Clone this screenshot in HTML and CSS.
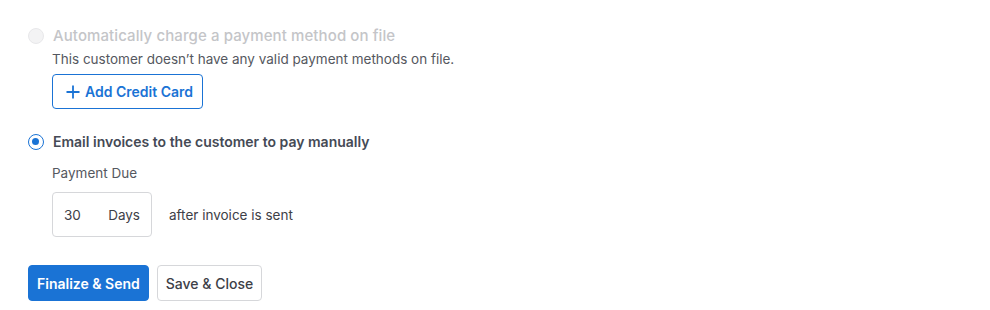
FILE: index.html
```
<!DOCTYPE html>
<html>
<head>
<meta charset="utf-8">
<link rel="stylesheet" href="styles.css">
</head>
<body>
<div class="page">
  <div class="option option-disabled">
    <div class="radio-row">
      <span class="radio radio-off"></span>
      <span class="radio-label">Automatically charge a payment method on file</span>
    </div>
    <div class="option-body">
      <p class="desc">This customer doesn’t have any valid payment methods on file.</p>
      <button class="btn btn-outline">
        <svg class="plus" width="14" height="14" viewBox="0 0 14 14"><path d="M7 0.5v13M0.5 7h13" stroke="currentColor" stroke-width="1.8" fill="none"/></svg>
        <span>Add Credit Card</span>
      </button>
    </div>
  </div>
  <div class="option option-active">
    <div class="radio-row">
      <span class="radio radio-on"></span>
      <span class="radio-label">Email invoices to the customer to pay manually</span>
    </div>
    <div class="option-body">
      <p class="field-label">Payment Due</p>
      <div class="due-row">
        <div class="due-box"><span class="due-num">30</span><span class="due-unit">Days</span></div>
        <span class="due-after">after invoice is sent</span>
      </div>
    </div>
  </div>
  <div class="actions">
    <button class="btn btn-primary">Finalize &amp; Send</button>
    <button class="btn btn-secondary">Save &amp; Close</button>
  </div>
</div>
</body>
</html>
```
FILE: styles.css
```
html, body { margin: 0; padding: 0; background: #fff; }
body { font-family: Inter, "Noto Sans", sans-serif; font-size: 13.5px; color: #4f5259; }
.page { padding: 28px 0 0 28px; }
p { margin: 0; }
.radio-row { display: flex; align-items: center; height: 16px; gap: 9px; }
.radio { box-sizing: border-box; width: 16px; height: 16px; border-radius: 50%; flex: none; }
.radio-off { background: #f3f3f4; border: 1px solid #e8e8ea; }
.radio-on { border: 1.5px solid #1a73d5; position: relative; background: #fff; }
.radio-on::after { content: ""; position: absolute; left: 3px; top: 3px; width: 7px; height: 7px; border-radius: 50%; background: #1a73d5; }
.radio-label { font-weight: 500; line-height: 16px; }
.option-disabled .radio-label { color: #c4c5c8; font-size: 15px; letter-spacing: 0.1px; }
.option-active .radio-label { color: #454a55; font-weight: 600; font-size: 14px; }
.option-body { padding-left: 24px; }
.desc { margin-top: 7px; line-height: 16px; color: #555860; }
.btn { font-family: inherit; font-size: 14px; border-radius: 4px; cursor: pointer; box-sizing: border-box; }
.btn-outline { margin-top: 7px; height: 35px; padding: 0 9px 0 13px; background: #fff; border: 1px solid #1a73d5; color: #1a73d5; font-weight: 600; display: flex; align-items: center; gap: 5px; }
.plus { display: block; }
.option-active { margin-top: 25px; }
.field-label { margin-top: 15px; line-height: 16px; color: #555860; }
.due-row { display: flex; align-items: center; margin-top: 11px; gap: 17px; }
.due-box { box-sizing: border-box; width: 100px; height: 45px; border: 1px solid #d6d7da; border-radius: 4px; display: flex; align-items: center; padding: 0 11px 0 11px; justify-content: space-between; color: #3d4047; }
.due-after { color: #3d4047; }
.actions { display: flex; gap: 8px; margin-top: 28px; }
.btn-primary { height: 36px; padding: 0 8px; background: #1a73d5; border: 1px solid #1a73d5; color: #fff; font-weight: 600; }
.btn-secondary { height: 36px; padding: 0 8px; background: #fff; border: 1px solid #d6d7da; color: #3d4047; font-weight: 500; }
```
